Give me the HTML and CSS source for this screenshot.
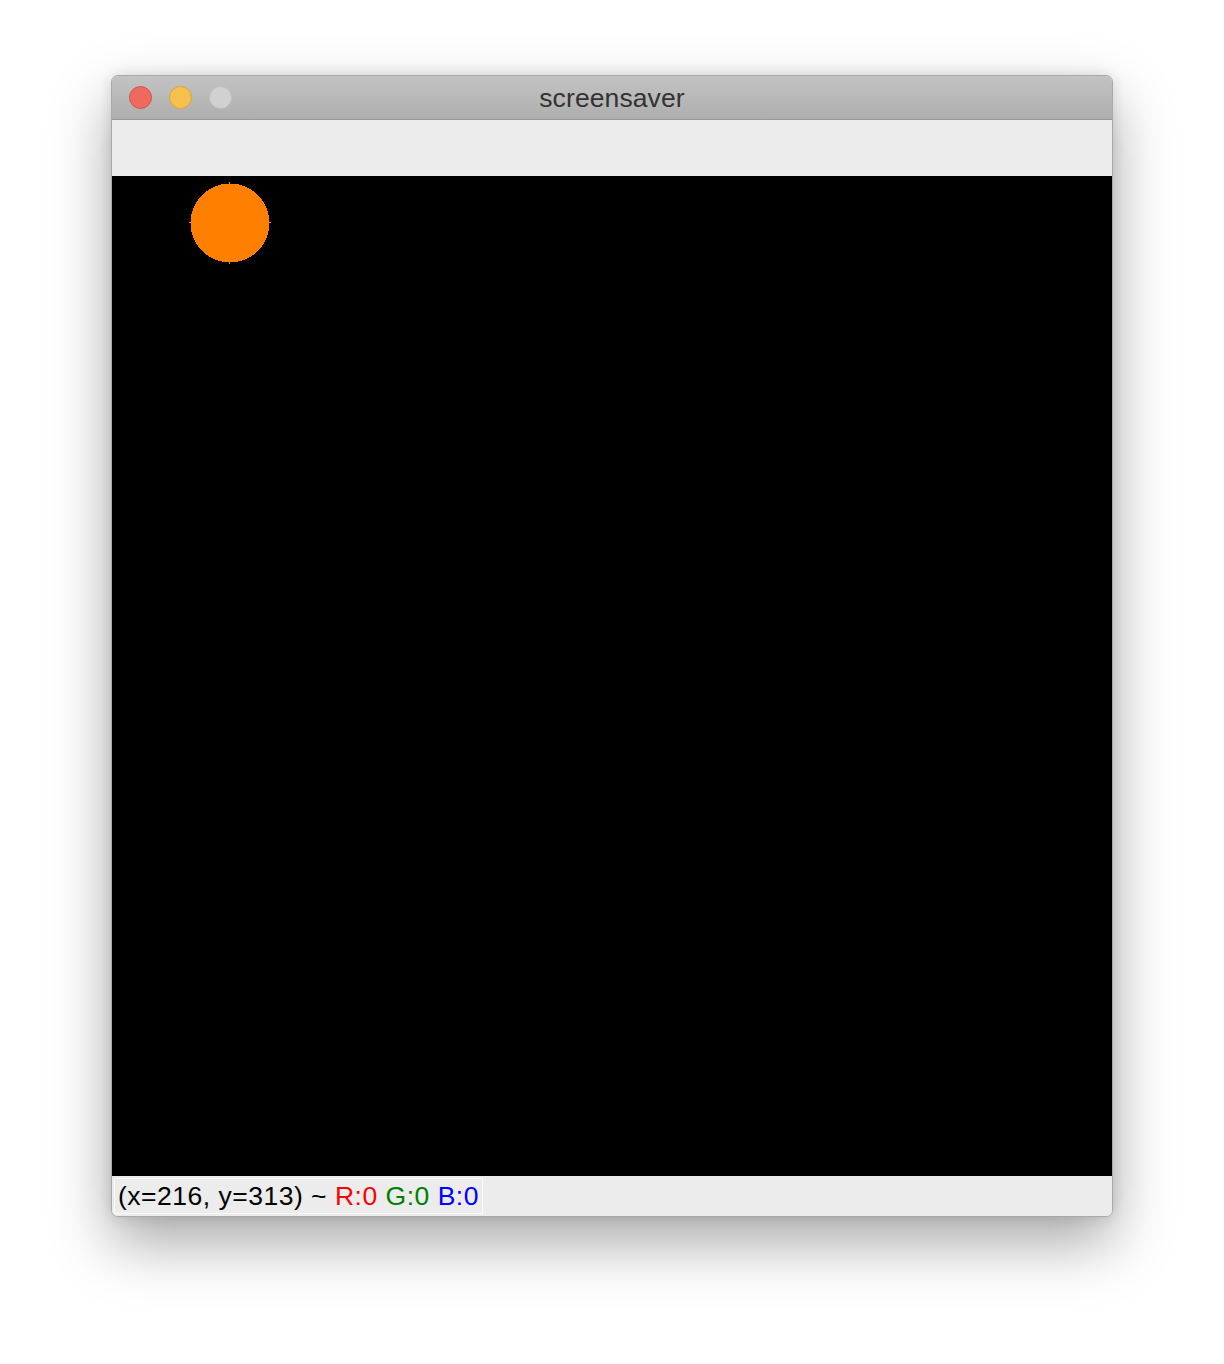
FILE: index.html
```html
<!DOCTYPE html>
<html>
<head>
<meta charset="utf-8">
<link rel="stylesheet" href="styles.css">
</head>
<body>
<div class="window">
  <div class="titlebar">
    <div class="lights">
      <span class="light red"></span>
      <span class="light yellow"></span>
      <span class="light gray"></span>
    </div>
    <div class="title">screensaver</div>
  </div>
  <div class="toolbar"></div>
  <div class="canvas">
    <svg class="ball" width="82" height="82" viewBox="0 0 82 82" shape-rendering="crispEdges">
      <circle cx="41" cy="41" r="39.5" fill="#ff8000"/>
      <rect x="40" y="0" width="1" height="2" fill="#ff8000"/>
      <rect x="40" y="80" width="1" height="2" fill="#ff8000"/>
      <rect x="0" y="40" width="2" height="1" fill="#ff8000"/>
      <rect x="80" y="40" width="2" height="1" fill="#ff8000"/>
    </svg>
  </div>
  <div class="statusbar">
    <div class="status-label">(x=216, y=313) ~ <span class="r">R:0</span> <span class="g">G:0</span> <span class="b">B:0</span></div>
  </div>
</div>
</body>
</html>
```

FILE: styles.css
```css
html, body {
  margin: 0;
  padding: 0;
  background: #ffffff;
}
body {
  box-sizing: border-box;
  min-height: 1364px;
  padding: 75px 0 0 111px;
  font-family: "Liberation Sans", Arial, sans-serif;
}
.window {
  width: 1000px;
  border: 1px solid #a9a9a9;
  border-radius: 7px;
  overflow: hidden;
  box-shadow: 0 26px 60px rgba(0, 0, 0, 0.34), 0 0 14px rgba(0, 0, 0, 0.12);
  background: #ececec;
}
.titlebar {
  height: 43px;
  background: linear-gradient(#c3c3c3, #aeaeae);
  border-bottom: 1px solid #999999;
  display: flex;
  align-items: center;
  justify-content: center;
  position: relative;
}
.lights {
  position: absolute;
  left: 17px;
  top: 10px;
  display: flex;
  gap: 17px;
}
.light {
  width: 23px;
  height: 23px;
  border-radius: 50%;
  box-sizing: border-box;
}
.red { background: #ee6a5f; border: 1px solid #d1534a; }
.yellow { background: #f6c04f; border: 1px solid #dba43d; }
.gray { background: #d1d1d1; border: 1px solid #c0c0c0; }
.title {
  font-size: 26.5px;
  letter-spacing: 0.1px;
  color: #333333;
  padding-top: 2px;
}
.toolbar {
  height: 56px;
  background: #ececec;
}
.canvas {
  height: 1000px;
  background: #000000;
  position: relative;
}
.ball {
  position: absolute;
  left: 77px;
  top: 6px;
}
.statusbar {
  height: 40px;
  background: #ececec;
  display: flex;
  align-items: center;
  padding-left: 2px;
}
.status-label {
  font-size: 26.5px;
  letter-spacing: 0.5px;
  color: #000000;
  background: #ececec;
  border: 1px solid #fafafa;
  padding: 2px 3px 1px 3px;
  line-height: 31px;
}
.r { color: #ff0000; }
.g { color: #008000; }
.b { color: #0000ff; }
```
